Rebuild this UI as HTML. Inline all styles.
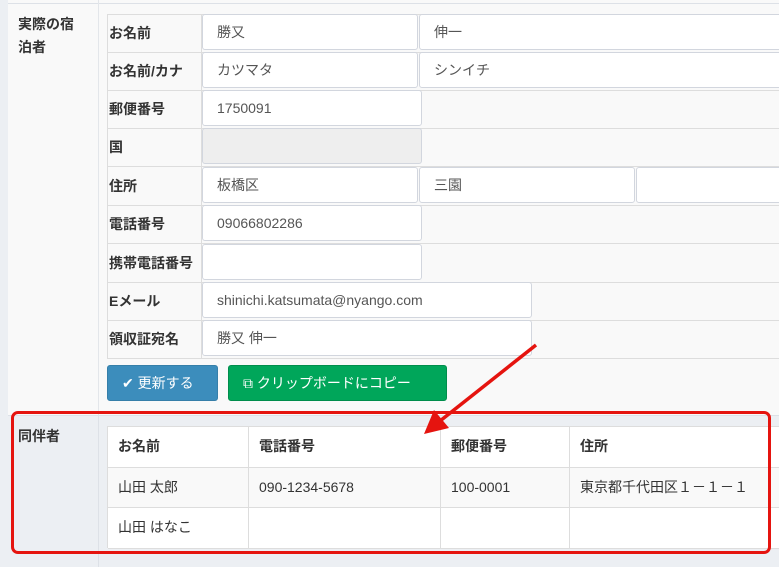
<!DOCTYPE html>
<html><head><meta charset="utf-8"><style>
*{box-sizing:border-box;margin:0;padding:0}
body{width:779px;height:567px;overflow:hidden;position:relative;background:#f9f9f9;font-family:"Liberation Sans","Noto Sans CJK JP",sans-serif;font-size:14px;color:#333}
.a{position:absolute}
.lab{position:absolute;font-weight:bold;font-size:14px;left:109px}
.in{position:absolute;background:#fff;border:1px solid #d2d6de;border-radius:3px;height:36px;padding-left:14px;line-height:34px;color:#555;font-size:14px}
.hl{position:absolute;left:107px;width:672px;height:1px;background:#ddd}
.cell{position:absolute;border-right:1px solid #ddd;border-bottom:1px solid #ddd;padding-left:10px;font-size:14px}
</style></head><body>
<div class="a" style="left:0;top:0;width:8px;height:567px;background:#eceff3"></div>
<div class="a" style="left:8px;top:3px;width:771px;height:1px;background:#dde1e7"></div>
<div class="a" style="left:98px;top:0;width:1px;height:567px;background:#e3e6ea"></div>
<div class="a" style="left:8px;top:415px;width:771px;height:152px;background:#eceff3"></div>
<div class="a" style="left:8px;top:415px;width:771px;height:1px;background:#dde1e7"></div>
<div class="a" style="left:99px;top:416px;width:680px;height:151px;background:#eceff3"></div>
<div class="a" style="left:98px;top:415px;width:1px;height:152px;background:#dde1e7"></div>
<div class="a" style="left:18px;top:13px;font-weight:bold;line-height:23px;width:70px">実際の宿<br>泊者</div>
<div class="a" style="left:18px;top:426px;font-weight:bold">同伴者</div>

<div class="a" style="left:107px;top:14px;width:672px;height:345px;border:1px solid #ddd;border-right:none"></div>
<div class="a" style="left:201px;top:14px;width:1px;height:345px;background:#ddd"></div>
<div class="hl" style="top:52px"></div><div class="hl" style="top:90px"></div><div class="hl" style="top:128px"></div><div class="hl" style="top:166px"></div><div class="hl" style="top:205px"></div><div class="hl" style="top:243px"></div><div class="hl" style="top:282px"></div><div class="hl" style="top:320px"></div>

<div class="lab" style="top:23px">お名前</div>
<div class="lab" style="top:61px">お名前/カナ</div>
<div class="lab" style="top:99px">郵便番号</div>
<div class="lab" style="top:137px">国</div>
<div class="lab" style="top:176px">住所</div>
<div class="lab" style="top:214px">電話番号</div>
<div class="lab" style="top:253px">携帯電話番号</div>
<div class="lab" style="top:291px">Eメール</div>
<div class="lab" style="top:329px">領収証宛名</div>

<div class="in" style="left:202px;top:14px;width:216px">勝又</div>
<div class="in" style="left:419px;top:14px;width:370px">伸一</div>
<div class="in" style="left:202px;top:52px;width:216px">カツマタ</div>
<div class="in" style="left:419px;top:52px;width:370px">シンイチ</div>
<div class="in" style="left:202px;top:90px;width:220px">1750091</div>
<div class="in" style="left:202px;top:128px;width:220px;background:#eee"></div>
<div class="in" style="left:202px;top:167px;width:216px">板橋区</div>
<div class="in" style="left:419px;top:167px;width:216px">三園</div>
<div class="in" style="left:636px;top:167px;width:160px"></div>
<div class="in" style="left:202px;top:205px;width:220px">09066802286</div>
<div class="in" style="left:202px;top:244px;width:220px"></div>
<div class="in" style="left:202px;top:282px;width:330px">shinichi.katsumata@nyango.com</div>
<div class="in" style="left:202px;top:320px;width:330px">勝又 伸一</div>

<div class="a" style="left:107px;top:365px;width:111px;height:36px;background:#3c8dbc;border:1px solid #367fa9;border-radius:3px;color:#fff;line-height:34px;padding-left:14px">✔ 更新する</div>
<div class="a" style="left:228px;top:365px;width:219px;height:36px;background:#00a65a;border:1px solid #008d4c;border-radius:3px;color:#fff;line-height:34px;padding-left:14px">⧉ クリップボードにコピー</div>

<div class="a" style="left:107px;top:426px;width:672px;height:122px;border-left:1px solid #ddd;border-top:1px solid #ddd"></div>
<div class="cell" style="left:108px;top:427px;width:141px;height:41px;background:#fff;font-weight:bold;line-height:38px">お名前</div>
<div class="cell" style="left:249px;top:427px;width:192px;height:41px;background:#fff;font-weight:bold;line-height:38px">電話番号</div>
<div class="cell" style="left:441px;top:427px;width:129px;height:41px;background:#fff;font-weight:bold;line-height:38px">郵便番号</div>
<div class="cell" style="left:570px;top:427px;width:209px;height:41px;background:#fff;font-weight:bold;line-height:38px;border-right:none">住所</div>
<div class="cell" style="left:108px;top:468px;width:141px;height:40px;background:#f9f9f9;line-height:38px">山田 太郎</div>
<div class="cell" style="left:249px;top:468px;width:192px;height:40px;background:#f9f9f9;line-height:38px">090-1234-5678</div>
<div class="cell" style="left:441px;top:468px;width:129px;height:40px;background:#f9f9f9;line-height:38px">100-0001</div>
<div class="cell" style="left:570px;top:468px;width:209px;height:40px;background:#f9f9f9;line-height:38px;border-right:none;white-space:nowrap">東京都千代田区１－１－１</div>
<div class="cell" style="left:108px;top:508px;width:141px;height:41px;background:#fff;line-height:38px">山田 はなこ</div>
<div class="cell" style="left:249px;top:508px;width:192px;height:41px;background:#fff"></div>
<div class="cell" style="left:441px;top:508px;width:129px;height:41px;background:#fff"></div>
<div class="cell" style="left:570px;top:508px;width:209px;height:41px;background:#fff;border-right:none"></div>

<div class="a" style="left:11px;top:411px;width:760px;height:143px;border:3px solid #e5140f;border-radius:7px"></div>
<svg class="a" style="left:0;top:0" width="779" height="567"><line x1="536" y1="345" x2="440" y2="421" stroke="#e5140f" stroke-width="3.5"/><polygon points="424,434 434,410 449,428" fill="#e5140f"/></svg>
</body></html>
